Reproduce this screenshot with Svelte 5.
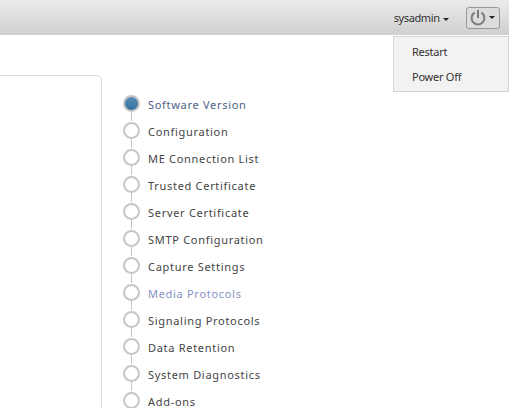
<script lang="ts">
  const steps = [
    { label: 'Software Version', state: 'done' },
    { label: 'Configuration' },
    { label: 'ME Connection List' },
    { label: 'Trusted Certificate' },
    { label: 'Server Certificate' },
    { label: 'SMTP Configuration' },
    { label: 'Capture Settings' },
    { label: 'Media Protocols', state: 'active' },
    { label: 'Signaling Protocols' },
    { label: 'Data Retention' },
    { label: 'System Diagnostics' },
    { label: 'Add-ons' }
  ];
</script>

<div class="page">
  <header class="topbar">
    <span class="user">sysadmin <span class="caret"></span></span>
    <button class="power" aria-label="Power">
      <svg width="16" height="17" viewBox="0 0 16 17" fill="none" stroke="#7a7a7a" stroke-width="2">
        <path d="M4.6 3.6a6.4 6.4 0 1 0 6.8 0" />
        <path d="M8 1v8" />
      </svg>
      <span class="caret"></span>
    </button>
  </header>

  <div class="menu">
    <div class="menu-item">Restart</div>
    <div class="menu-item">Power Off</div>
  </div>

  <main class="content">
    <div class="panel"></div>
    <ol class="steps">
      {#each steps as step}
        <li class="step" class:done={step.state === 'done'} class:active={step.state === 'active'}>
          <span class="dot"></span>
          <span class="label">{step.label}</span>
        </li>
      {/each}
    </ol>
  </main>
</div>

<style>
  :global(body) {
    margin: 0;
    background: #fff;
    overflow: hidden;
  }

  .page {
    position: relative;
    width: 509px;
    height: 408px;
    overflow: hidden;
    font-family: "Noto Sans", sans-serif;
  }

  .topbar {
    display: flex;
    align-items: center;
    justify-content: flex-end;
    gap: 17px;
    height: 35px;
    padding-right: 9px;
    box-sizing: border-box;
    background: linear-gradient(#ebebeb, #cfcfcf);
  }

  .user {
    font-size: 11px;
    letter-spacing: -0.4px;
    color: #333;
  }

  .caret {
    display: inline-block;
    width: 0;
    height: 0;
    margin-left: 1px;
    vertical-align: middle;
    border-left: 3px solid transparent;
    border-right: 3px solid transparent;
    border-top: 3px solid #222;
  }

  .power {
    display: flex;
    align-items: center;
    gap: 2px;
    width: 34px;
    height: 22px;
    padding: 0 0 0 3px;
    box-sizing: border-box;
    background: #dcdcdc;
    border: 1px solid #999;
    border-radius: 3px;
  }

  .menu {
    position: absolute;
    top: 36px;
    left: 393px;
    width: 116px;
    height: 56px;
    box-sizing: border-box;
    padding-top: 3px;
    background: #f2f2f2;
    border: 1px solid #d4d4d4;
  }

  .menu-item {
    height: 25px;
    line-height: 23px;
    padding-left: 18px;
    font-size: 11px;
    letter-spacing: -0.25px;
    color: #333;
  }

  .content {
    display: flex;
    padding-top: 40px;
  }

  .panel {
    flex: none;
    width: 103px;
    height: 340px;
    margin-left: -1px;
    box-sizing: border-box;
    border: 1px solid #ddd;
    border-radius: 0 5px 0 0;
  }

  .steps {
    list-style: none;
    margin: 16px 0 0 21px;
    padding: 0;
  }

  .step {
    position: relative;
    display: flex;
    align-items: center;
    gap: 8px;
    height: 27px;
  }

  .step:not(:last-child)::after {
    content: '';
    position: absolute;
    left: 8px;
    top: 19px;
    width: 1px;
    height: 11px;
    background: #c4c4c4;
  }

  .dot {
    flex: none;
    width: 17px;
    height: 17px;
    margin-bottom: 2px;
    box-sizing: border-box;
    border: 2px solid #c6c6c6;
    border-radius: 50%;
    background: #fff;
  }

  .done .dot {
    background: linear-gradient(#5a8fb8, #33709f);
  }

  .label {
    font-size: 11px;
    letter-spacing: 0.7px;
    color: #444;
    white-space: nowrap;
  }

  .done .label {
    color: #4a5f86;
  }

  .active .label {
    color: #8593c4;
  }
</style>
